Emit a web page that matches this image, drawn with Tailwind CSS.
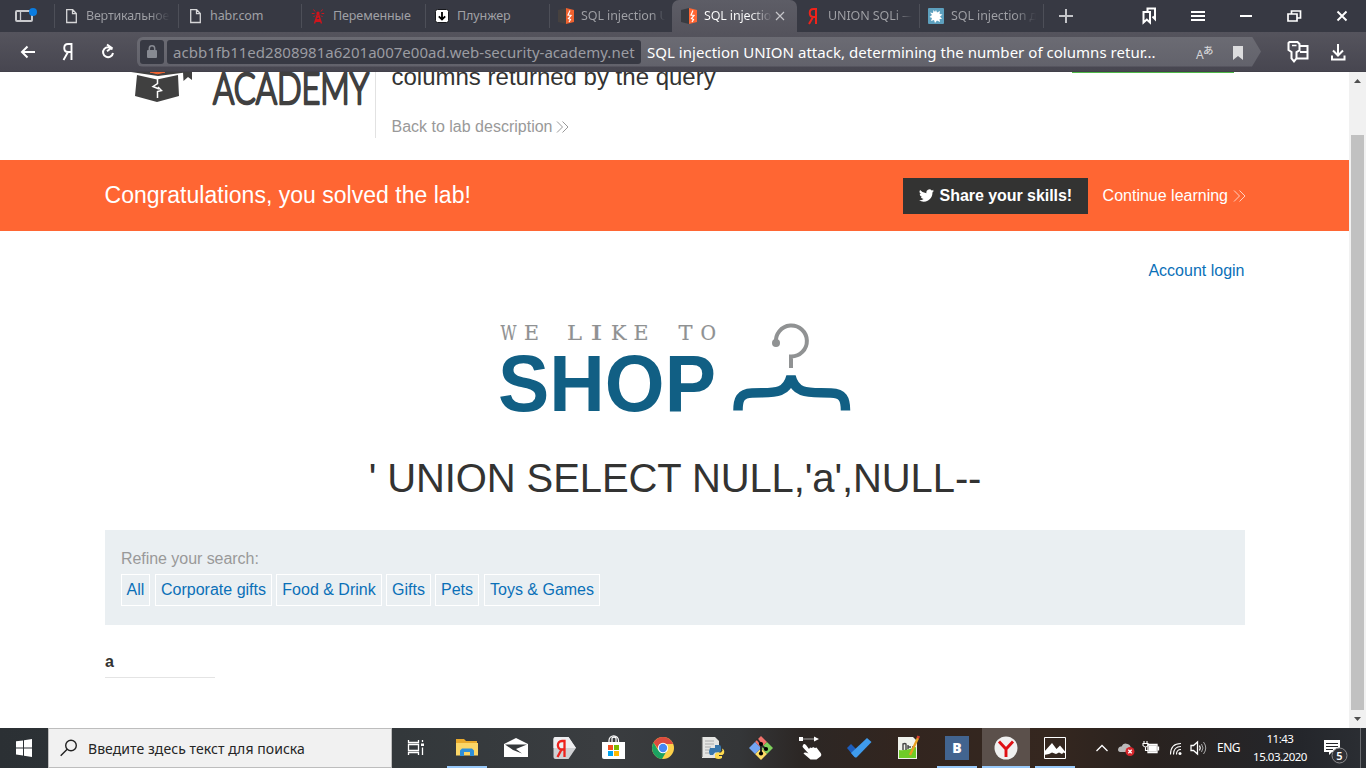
<!DOCTYPE html>
<html lang="ru">
<head>
<meta charset="utf-8">
<title>SQL injection UNION attack</title>
<script src="https://cdn.jsdelivr.net/npm/@tailwindcss/browser@4"></script>
</head>
<body class="w-[1366px] h-[768px] overflow-hidden flex flex-col bg-white font-['Noto_Sans',sans-serif]">

<!-- Tab strip -->
<div class="h-8 shrink-0 bg-[#373943] flex items-center text-[12.5px] text-[#a0a1a6] whitespace-nowrap">
  <div class="w-[54px] h-8 shrink-0">
    <svg width="54" height="32" fill="none"><rect x="16" y="11" width="16" height="10" rx="1" stroke="#c9cacd" stroke-width="2"/><path d="M20.5 11v10" stroke="#c9cacd" stroke-width="1.3"/><circle cx="33" cy="12" r="4" fill="#0a7ce0"/></svg>
  </div>
  <div class="w-[124px] h-6 shrink-0 border-l border-[#4d4f58] flex items-center pl-[9px]">
    <svg class="shrink-0" width="16" height="16" fill="none" stroke="#d6d6d8" stroke-width="1.3"><path d="M2.7 1.7h6l3.6 3.8v9H2.7zM8.5 1.7v4h3.8"/></svg>
    <div class="ml-[6px] mt-px w-[84px] overflow-hidden tracking-[-0.2px] bg-linear-to-r from-[#a0a1a6] from-75% to-[#373943] bg-clip-text text-transparent">Вертикальное</div>
  </div>
  <div class="w-[123px] h-6 shrink-0 border-l border-[#4d4f58] flex items-center pl-[9px]">
    <svg class="shrink-0" width="16" height="16" fill="none" stroke="#d6d6d8" stroke-width="1.3"><path d="M2.7 1.7h6l3.6 3.8v9H2.7zM8.5 1.7v4h3.8"/></svg>
    <div class="ml-[6px] mt-px tracking-[-0.1px]">habr.com</div>
  </div>
  <div class="w-[124px] h-6 shrink-0 border-l border-[#4d4f58] flex items-center pl-[8px]">
    <svg class="shrink-0" width="16" height="16" fill="none" stroke="#d0141c" stroke-width="1.4"><path d="M4.500 15.500 7.500 6h1l3 9.500M5.300 13.500l5-2.500M10.700 13.500l-5-2.500M6.500 10 9.300 8"/><path d="M5 3.500 3.500 1.500M4.500 5.500H1.800M5 7.500 3.500 9M11 3.500l1.500-2M11.500 5.500h2.700M11 7.500 12.500 9" stroke-width="1"/><circle cx="8" cy="5" r="1.600" fill="#d0141c" stroke="none"/></svg>
    <div class="ml-[7px] mt-px tracking-[-0.1px]">Переменные</div>
  </div>
  <div class="w-[124px] h-6 shrink-0 border-l border-[#4d4f58] flex items-center pl-[8px]">
    <svg class="shrink-0" width="16" height="16"><rect x="1.500" y="1.500" width="13" height="13" rx="2" fill="#fff" stroke="#17181c" stroke-width="1"/><path d="M8 4v7.500M4.800 8.300 8 11.500l3.200-3.200" fill="none" stroke="#000" stroke-width="1.800"/></svg>
    <div class="ml-[7px] mt-px tracking-[-0.1px]">Плунжер</div>
  </div>
  <div class="w-[123px] h-6 shrink-0 border-l border-[#4d4f58] flex items-center pl-[8px]">
    <svg class="shrink-0" width="16" height="16"><path d="M0 2 8 0v16l-8-2z" fill="#46413f"/><path d="M8 0l8 2v12l-8 2z" fill="#f0622f"/><path d="M12 2.500 10 7l3 .500-2.500 3 2 1-1.500 2.500" fill="none" stroke="#fff" stroke-width="1.200"/></svg>
    <div class="ml-[7px] mt-px w-[84px] overflow-hidden bg-linear-to-r from-[#a0a1a6] from-85% to-[#373943] bg-clip-text text-transparent tracking-[-0.1px]">SQL injection UNION</div>
  </div>
  <div class="w-[125px] h-8 shrink-0 rounded-t-[7px] bg-linear-to-b from-[#5d5d66] to-[#55545d] flex items-center pl-[9px]">
    <svg class="shrink-0" width="16" height="16"><path d="M0 2 8 0v16l-8-2z" fill="#393b40"/><path d="M8 0l8 2v12l-8 2z" fill="#ff6633"/><path d="M12 2.500 10 7l3 .500-2.500 3 2 1-1.500 2.500" fill="none" stroke="#fff" stroke-width="1.200"/></svg>
    <div class="ml-[7px] mt-px w-[68px] overflow-hidden bg-linear-to-r from-white from-70% to-[#5a5962] bg-clip-text text-transparent tracking-[-0.15px]">SQL injection</div>
    <svg class="ml-[3px]" width="10" height="10" fill="none" stroke="#c6c6ca" stroke-width="1.200"><path d="m1 1 8 8M9 1 1 9"/></svg>
  </div>
  <div class="w-[122px] h-6 shrink-0 flex items-center pl-[8px]">
    <svg class="shrink-0" width="16" height="18" fill="none" stroke="#f0231b" stroke-width="2"><path d="M11 17V2H8.500C3.500 2 3.500 10 8.500 10H11M8 10l-4 7"/></svg>
    <div class="ml-[7px] mt-px w-[84px] overflow-hidden bg-linear-to-r from-[#a0a1a6] from-80% to-[#373943] bg-clip-text text-transparent tracking-[-0.1px]">UNION SQLi — Я</div>
  </div>
  <div class="w-[124px] h-6 shrink-0 border-l border-[#4d4f58] flex items-center pl-[8px]">
    <svg class="shrink-0" width="16" height="16"><rect width="16" height="16" rx="1" fill="#5da0be"/><path d="m8 2 1 2.500L12 3l-.500 3 3 .500-2.500 2 2 2.500h-2.500l.500 3-3-1.500L7 15l-1-3-3 1 1-3-2.500-1L4 7 2 4.500l3 .500L5.500 2 7 4z" fill="#fff"/></svg>
    <div class="ml-[7px] mt-px w-[85px] overflow-hidden bg-linear-to-r from-[#a0a1a6] from-75% to-[#373943] bg-clip-text text-transparent tracking-[-0.1px]">SQL injection для</div>
  </div>
  <div class="h-6 grow border-l border-[#4d4f58]">
    <svg class="-mt-1" width="322" height="32" fill="none" stroke="#fff">
      <path d="M15 16h14M22 9v14" stroke="#c4c5c9" stroke-width="2"/>
      <path d="M99.500 12h6.500v10.500l-3.200-3-3.300 3z" stroke-width="2"/><path d="M103.500 11V8.500h7.500v10.500l-2.500-2.500" stroke-width="2"/>
      <path d="M147 12h14M147 16h14M147 20h14" stroke-width="2"/>
      <path d="M196 16h12" stroke-width="2"/>
      <path d="M244 14h9v7h-9zM247.500 13.500V11h9v7h-3" stroke-width="1.700"/>
      <path d="m293.500 11.500 9 9M302.500 11.500l-9 9" stroke-width="1.900"/>
    </svg>
  </div>
</div>

<!-- Address bar -->
<div class="h-10 shrink-0 bg-linear-to-b from-[#55545d] to-[#474650] border-b border-[#42414a] flex items-center">
  <svg class="shrink-0" width="137" height="40" fill="none" stroke="#fff" stroke-width="2"><path d="M35 20H22M27.500 14.500 22 20l5.500 5.500"/><path d="M71.500 28V12H68c-5 0-5 8 0 8h3.500M68 20l-4.500 8" stroke-width="1.900"/><path d="M112.300 17.500A5 5 0 1 0 113 21M107 12.500l4.500 3.300-4.500 3.500" /></svg>
  <div class="w-[1124px] h-[30px] rounded-l-[6px] bg-linear-to-b from-[#6b6b73] to-[#62626b] flex items-center pl-[3px] [clip-path:polygon(0_0,1115px_0,100%_50%,1115px_100%,0_100%)] text-[15px] whitespace-nowrap">
    <div class="w-6 h-6 rounded-[3px] bg-[#373943] flex items-center justify-center"><svg width="10" height="13"><rect y="5" width="10" height="8" rx="1" fill="#878a92"/><path d="M2.300 6V3.500a2.700 2.700 0 0 1 5.400 0V6" fill="none" stroke="#878a92" stroke-width="1.500"/></svg></div>
    <div class="ml-[3px] w-[474px] h-6 rounded-[3px] bg-[#373943] text-[#9b9ca2] pl-[6px] leading-[24px] tracking-[0.02px]">acbb1fb11ed2808981a6201a007e00ad.web-security-academy.net</div>
    <div class="ml-[6px] w-[540px] text-white leading-[24px] tracking-[0.03px]">SQL injection UNION attack, determining the number of columns retur...</div>
    <svg class="ml-[5px]" width="60" height="30"><text x="4" y="22" font-size="12" fill="#d5d5d8">A</text><text x="11" y="17" font-size="10.500" font-weight="500" font-family="Noto Sans CJK JP" fill="#d5d5d8">あ</text><path d="M41 9h10v14l-5-4-5 4z" fill="#dcdcde"/></svg>
  </div>
  <svg width="105" height="40" fill="none" stroke="#fff" stroke-width="2"><path d="M28.500 10h8l2 2v6.500l-3 1.500v6.500l-2.500 3-2.500-3V20l-3-2v-7z"/><path d="M31 13.500h4.500" stroke-width="1.500"/><path d="M39 14h7.500v12.500H36M39 20h7.500"/><path d="M77 12v12M72 18.500l5 5 5-5M71 23.500v4h12.500v-4"/></svg>
</div>

<!-- Page -->
<div class="h-[656px] shrink-0 flex font-['Liberation_Sans',Arial,sans-serif] text-base text-[#333332]">
  <main class="w-[1349px] flex flex-col">
    <header class="h-[88px] shrink-0 flex pl-[105px]">
      <svg class="shrink-0" width="270" height="66">
        <path d="M26 0h58L53 4z" fill="#404040"/><path d="M45 0h15L52.500 1.800z" fill="#f26531" stroke="#f26531"/>
        <path d="M32 3 52 7.500 73 3l1 21-22 6-22-6z" fill="#404040"/>
        <path d="M52.500 6.500v5l-4.500 3 6 2.500M52.500 26v-6.500l4-1-3.500-3.500" fill="none" stroke="#fff" stroke-width="1.500"/>
        <path d="M78 0h9v8l-4-3-4.500 4z" fill="#404040"/>
        <text x="108" y="31.500" font-family="Lato" font-weight="300" font-size="42.500" textLength="156" lengthAdjust="spacingAndGlyphs" fill="#404040" stroke="#404040" stroke-width="2.600" stroke-linejoin="round">ACADEMY</text>
      </svg>
      <div class="h-[66px] border-l border-[#e2e2e2] pl-[15.500px] w-[696px] overflow-hidden">
        <div class="text-[24px] leading-[28px] -mt-[9px]">columns returned by the query</div>
        <div class="mt-[27px] text-[#999] leading-[18px] flex items-center">Back to lab description<svg class="ml-1" width="13" height="12" fill="none" stroke="#999"><path d="m1 .500 5.500 5.500L1 11.500M6.500 .500 12 6l-5.500 5.500"/></svg></div>
      </div>
      <div class="ml-px w-[162px] h-px bg-[#4fb948]"></div>
    </header>

    <section class="h-[71px] shrink-0 bg-[#ff6633] text-white flex items-center pl-[104.500px] pr-[103px]">
      <div class="text-[23px] grow -mt-px tracking-[0.02px]">Congratulations, you solved the lab!</div>
      <div class="w-[185px] h-9 bg-[#333332] flex items-center pl-4 font-bold"><svg width="15" height="13" viewBox="0 2 24 20" fill="#fff"><path d="M24 4.560a9.800 9.800 0 0 1-2.800.780 4.900 4.900 0 0 0 2.200-2.700 9.900 9.900 0 0 1-3.100 1.200A4.900 4.900 0 0 0 11.900 8.300 14 14 0 0 1 1.700 3.100a4.900 4.900 0 0 0 1.500 6.600 4.900 4.900 0 0 1-2.200-.600 4.900 4.900 0 0 0 3.900 4.900 5 5 0 0 1-2.200.100 4.900 4.900 0 0 0 4.600 3.400A9.900 9.900 0 0 1 0 19.500a14 14 0 0 0 21.500-12.400A10 10 0 0 0 24 4.560z"/></svg><span class="ml-[6px] tracking-[-0.05px]">Share your skills!</span></div>
      <div class="ml-[15px] flex items-center"><span>Continue learning</span><svg class="ml-[5px]" width="13" height="12" fill="none" stroke="#ffd0c0"><path d="m1 .500 5.500 5.500L1 11.500M6.500 .500 12 6l-5.500 5.500"/></svg></div>
    </section>

    <div class="w-[1140px] ml-[105px] flex flex-col">
      <a class="self-end mt-[31px] mr-[0.500px] text-[#0a70b8] leading-[18px]">Account login</a>
      <svg class="mt-[30px] ml-[375px]" width="390" height="115">
        <text y="29.500" font-family="DejaVu Serif" font-size="21" fill="#8f9192" stroke="#8f9192" stroke-width=".2"><tspan x="20.500" textLength="16" lengthAdjust="spacingAndGlyphs">W</tspan><tspan x="44" textLength="15" lengthAdjust="spacingAndGlyphs">E</tspan><tspan x="87" textLength="15" lengthAdjust="spacingAndGlyphs">L</tspan><tspan x="110.500" textLength="12" lengthAdjust="spacingAndGlyphs">I</tspan><tspan x="131" textLength="15.500" lengthAdjust="spacingAndGlyphs">K</tspan><tspan x="153.500" textLength="15" lengthAdjust="spacingAndGlyphs">E</tspan><tspan x="198.500" textLength="14" lengthAdjust="spacingAndGlyphs">T</tspan><tspan x="220.500" textLength="15.500" lengthAdjust="spacingAndGlyphs">O</tspan></text>
        <text x="18" y="100.500" font-family="Liberation Sans" font-weight="700" font-size="80.500" textLength="218" lengthAdjust="spacingAndGlyphs" fill="#115f84">SHOP</text>
        <path d="M296 33A15.500 15.500 0 1 1 311 46.500V58" fill="none" stroke="#909293" stroke-width="4"/><circle cx="296" cy="33" r="4" fill="#909293"/>
        <path d="M258 100.500c0-11 2-17 14-17.500 19-1 34 3 39-16.500 5 19.500 20 15.500 40 16.500 12 .500 14.500 6 14.500 17.500" fill="none" stroke="#115f84" stroke-width="9.500"/>
      </svg>
      <h1 class="mt-[29px] text-[40px] leading-[48px] text-center tracking-[-0.1px]">' UNION SELECT NULL,'a',NULL--</h1>
      <section class="mt-[28px] h-[95px] bg-[#eaeff2] pl-4 pt-[19px]">
        <div class="text-[#999] leading-[19px] tracking-[-0.05px]">Refine your search:</div>
        <div class="mt-[6px] flex gap-[4px] text-[#0a70b8] leading-[30px] whitespace-nowrap">
          <a class="border border-white w-[29px] mr-px text-center">All</a>
          <a class="border border-white w-[117px] text-center">Corporate gifts</a>
          <a class="border border-white w-[106px] text-center">Food &amp; Drink</a>
          <a class="border border-white w-[45px] text-center">Gifts</a>
          <a class="border border-white w-[44px] mr-px text-center">Pets</a>
          <a class="border border-white w-[116px] text-center">Toys &amp; Games</a>
        </div>
      </section>
      <div class="mt-[28px] w-[110px] h-[25px] border-b border-[#e4e4e4] font-bold leading-[18px]">a</div>
    </div>
  </main>
  <div class="w-[17px] bg-[#f1f1f1] flex flex-col justify-between items-center">
    <svg width="17" height="17"><path d="m5 11 3.500-4L12 11z" fill="#505050"/></svg>
    <div class="grow w-[13px] mt-[46px] mb-px bg-[#c1c1c1]"></div>
    <svg width="17" height="17"><path d="m5 6 3.500 4L12 6z" fill="#505050"/></svg>
  </div>
</div>

<!-- Taskbar -->
<div class="h-10 shrink-0 flex text-white whitespace-nowrap bg-[linear-gradient(90deg,#2b3034_0,#33383b_400px,#3a3d40_600px,#343638_740px,#2c2725_800px,#32251f_900px,#35271f_1050px,#29221f_1150px,#24262b_1300px,#2b2e33_1366px)]">
  <svg class="shrink-0" width="48" height="40" fill="#fff"><path d="m16 13.300 7-.900V19.500h-7zM24 12.200l8-1.100v8.400h-8zM16 20.500h7v7l-7-1zM24 20.500h8V29l-8-1.200z"/></svg>
  <div class="w-[344px] h-10 shrink-0 bg-[#f1f1f1] border border-[#bdbdbd] flex items-center text-[14px] text-[#252525] pl-[11px]">
    <svg width="18" height="18" fill="none" stroke="#222" stroke-width="1.400"><circle cx="11" cy="6.500" r="5.300"/><path d="m7.200 10.300-6.500 6.500"/></svg><span class="ml-[10px] tracking-[0.06px]">Введите здесь текст для поиска</span>
  </div>
  <svg class="shrink-0 mr-[3px]" width="48" height="40" fill="none" stroke="#fff" stroke-width="1.300"><path d="M16.500 12v2.500h10V12M16.500 27v-2.500h10V27M16.500 16.500h10v6h-10zM30.500 12v2M30.500 19.500V27"/><path d="M29 15.500h3v2.500h-3z" fill="#fff" stroke="none"/></svg>
  <div class="flex gap-px">
    <div class="w-12 h-10"><svg width="48" height="40"><path d="M13 11h8l2 2h11v14H13z" fill="#e9aa2c"/><path d="M13 15h22v12.500H13z" fill="#fbd667"/><path d="M17 28v-5.500l2-2h10l2 2V28h-4v-4h-6v4z" fill="#2e8fd8"/><path d="M4 38h40v2H4z" fill="#98c9fa"/></svg></div>
    <div class="w-12 h-10"><svg width="48" height="40"><path d="m12 16 12-6 12 6v13H12z" fill="#fff"/><path d="M13 16.500h22L24 21l6 4.500-9-3.500z" fill="#35383b"/></svg></div>
    <div class="w-12 h-10"><svg width="48" height="40"><path d="M14.500 9h13l7.500 11-7.500 11h-13q-2 0-2-2V11q0-2 2-2z" fill="#d0d1d4"/><path d="M14.500 9h13L35 20H12.500v-9q0-2 2-2z" fill="#eeeef0"/><path d="M23.500 29V13H21C15.500 13 15.500 21.500 21 21.500h2.500M20.500 21.500 16.500 29" fill="none" stroke="#ee221c" stroke-width="2.300"/></svg></div>
    <div class="w-12 h-10"><svg width="48" height="40"><path d="M12 14h23v17H14q-2 0-2-2z" fill="#fff"/><path d="M19 15v-2.500a4 4 0 0 1 9.500 0V15M22 15v-5q2-2 4 0v5" fill="none" stroke="#fff" stroke-width="1.200"/><path d="M18 17h5v5h-5z" fill="#f25022"/><path d="M24 17h5v5h-5z" fill="#7fba00"/><path d="M18 23h5v5h-5z" fill="#00a4ef"/><path d="M24 23h5v5h-5z" fill="#ffb900"/></svg></div>
    <div class="w-12 h-10"><svg width="48" height="40"><circle cx="24" cy="20" r="11" fill="#fdd04a"/><path d="M14.500 14.500a11 11 0 0 1 19 0L34 16H24l-4 6z" fill="#dc4b3e"/><path d="M14.500 14.500A11 11 0 0 0 23 31l5-8.500-4 2.500-5-3z" fill="#1ba261"/><circle cx="24" cy="20" r="5.200" fill="#fff"/><circle cx="24" cy="20" r="4.200" fill="#4688f4"/></svg></div>
    <div class="w-12 h-10"><svg width="48" height="40"><path d="M14 9h13l4 4v17H14z" fill="#e5e5e3"/><path d="M14 9.500v20" stroke="#555" stroke-width="2" stroke-dasharray="1 1"/><path d="M17 13h9M17 16h9M17 19h6M17 22h4M17 25h4" stroke="#aaa"/><path d="M22 20h5v-3h4q2 0 2 2v4l-2 1.500h-4L25 27h-3q-2-3 0-7z" fill="#3876ab"/><path d="M34 20.500q3 1 2 5l-1.500 1.500H31V28h3v2q-3 2-7 0v-4l2-1.500h4l1.500-2z" fill="#ffdb4f"/></svg></div>
    <div class="w-12 h-10"><svg width="48" height="40"><path d="m24 8 6 6-6 6-6-6z" fill="#f0716b"/><path d="m30 14 6 6-6 6-6-6z" fill="#7ed05c"/><path d="m24 20 6 6-6 6-6-6z" fill="#fcdc66"/><path d="m18 14 6 6-6 6-6-6z" fill="#73a5f3"/><path d="m20 11 4 5v10M24 17l5 4" fill="none" stroke="#2c2c2c" stroke-width="2"/><circle cx="24" cy="16" r="2.100"/><circle cx="24" cy="25.500" r="2.100"/><circle cx="29" cy="21" r="2.100"/></svg></div>
    <div class="w-12 h-10"><svg width="48" height="40" fill="#fff"><path d="M13 9h4v4h-4zM28 8.500l5 2.500-5 2.500z"/><path d="M17 11h11" stroke="#aaa"/><path d="M17 17q1-2 3 0l3 4 1-1.500 2 .500 1-1 2 1 1.500-.500 3 4q3 3 1 5l-4 3h-6l-7-6q1-2 5 0l-5.500-6q-1-1 0-2.500z"/></svg></div>
    <div class="w-12 h-10"><svg width="48" height="40"><path d="m12 20 4-4 8 8-4.500 5z" fill="#1d5dbc"/><path d="m19.500 29-3.500-4L32 10l4.500 4L22 29q-1.200 1-2.500 0z" fill="#3f9bec"/></svg></div>
    <div class="w-12 h-10"><svg width="48" height="40"><path d="M14 9h15l4 4v18H14z" fill="#f0f2ec"/><path d="M15 22q8 1 17-3v11H15z" fill="#6fcc27"/><path d="M19 22v-6q2-1 3 0v6M24 17v4M24 19h3M28 19h3" stroke="#444" stroke-width="1.400" fill="none"/><path d="m34 10-8 17" stroke="#e9a022" stroke-width="2.400"/><path d="m34.700 8-1 2.300" stroke="#d63d2e" stroke-width="2.800"/></svg></div>
    <div class="w-12 h-10"><svg width="48" height="40"><path d="M12 8h24v24H12z" fill="#42648f"/><text x="24" y="25" text-anchor="middle" font-family="Open Sans" font-weight="800" font-size="14" fill="#fff">B</text><path d="M4 38h40v2H4z" fill="#98c9fa"/></svg></div>
    <div class="w-12 h-10 bg-[#5b504b]"><svg width="48" height="40"><circle cx="24" cy="20" r="11.500" fill="#f0f0f0"/><path d="m17 13.500 7 7.500 7-7.500M24 20v9" fill="none" stroke="#df1014" stroke-width="2.900"/><path d="M0 38h48v2H0z" fill="#98c9fa"/></svg></div>
    <div class="w-12 h-10"><svg width="48" height="40"><path d="M13.500 9.500h21v21h-21z" fill="none" stroke="#fff"/><path d="M13 24l8-9 4.500 6 3.500-3.500 5.500 6.500v1.500l-2-1-1.500 1.500-3-1.500-3 1.500-4-1.500-3 1.500-5 1z" fill="#fff"/><path d="M4 38h40v2H4z" fill="#98c9fa"/></svg></div>
  </div>
  <svg class="shrink-0" width="138" height="40" fill="none" stroke="#fff" stroke-width="1.300"><path d="m17.500 23 5.500-5.500 5.500 5.500"/><path d="M41 24q-3-1-1.500-4 1-2 3-1.500 2-4.500 6-2.500 4 1 3.500 7v1z" fill="#b9b9b9" stroke="none"/><circle cx="51" cy="23.500" r="4.500" fill="#d7262c" stroke="none"/><path d="m49.300 21.800 3.400 3.400M52.700 21.800l-3.400 3.400"/><path d="M69 16.500h9v8h-9zM79.500 18.500v4"/><path d="M70.500 18h6.500v5h-6.500z" fill="#fff"/><path d="M65 13v2M68 13v2M64 15.500h5v2q-2.500 3-5 0zM66.500 19v3.500h3" stroke-width="1.100"/><path d="M91.500 26.500q0-11 10.500-11M94.500 26.500q0-8 7.500-8M97.500 26.500q0-5 4.500-5" stroke-width="1.100"/><circle cx="101" cy="25.500" r="1.500" fill="#fff" stroke="none"/><path d="M112 17.500h2.500l4-3.500v12l-4-3.500H112z"/><path d="M120.500 17.500q1.500 2.500 0 5"/><path d="M122.500 16q3 4 0 8M124.500 14q4.500 6 0 12" stroke="#aaa" stroke-width="1"/></svg>
  <div class="w-[28px] text-[12px] leading-[39px] tracking-[-0.5px]">ENG</div>
  <div class="w-[70px] text-center text-[11.500px] leading-[18px] pt-[2px] tracking-[-0.5px]"><div>11:43</div><div>15.03.2020</div></div>
  <svg class="shrink-0" width="50" height="40"><path d="M9 12h16v12h-8l-3 3v-3H9z" fill="#fff"/><path d="M11 15.500h12M11 18.500h12M11 21.500h7" stroke="#25262a"/><circle cx="24.500" cy="27.500" r="7.500" fill="#303136" stroke="#8c8c8e"/><text x="24.500" y="31.500" text-anchor="middle" font-size="11" font-weight="600" fill="#fff">5</text><path d="M45.500 0v40" stroke="#6a6c70"/></svg>
</div>
</body>
</html>
